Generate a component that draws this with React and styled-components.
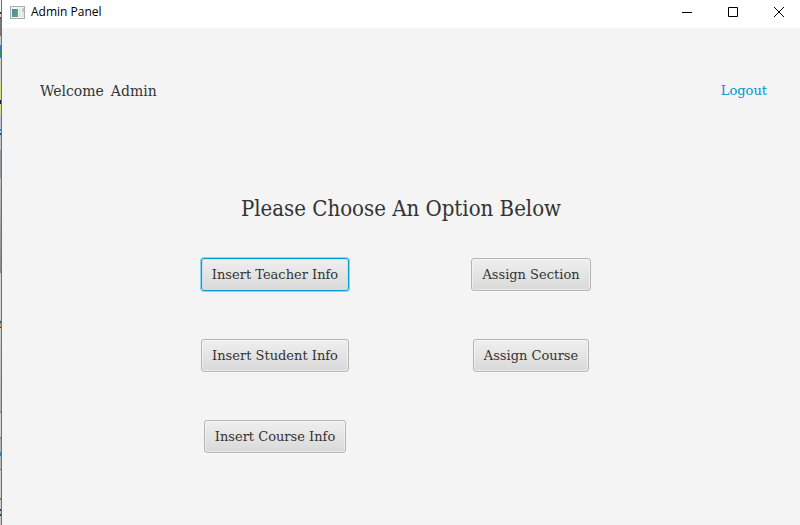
import React from "react";
import styled, { createGlobalStyle } from "styled-components";

const GlobalStyle = createGlobalStyle`
  * { box-sizing: border-box; }
  body { margin: 0; background: #f4f4f4; }
`;

const serif = `"DejaVu Serif", serif`;
const headingSerif = `"DejaVu Serif Condensed", "DejaVu Serif", serif`;

const Screen = styled.div`
  display: grid;
  grid-template-columns: 2px 1fr;
  min-height: 100vh;
`;

const DesktopEdge = styled.div`
  border-right: 1px solid #707070;
  background: linear-gradient(
    #f0f0f0 0 12px, #333 12px 14px, #ddd 14px 17px, #555 17px 19px, #777 19px 36px,
    #c8c8c8 36px 45px, #3c78b4 45px 51px, #2c8c50 51px 56px, #3c78b4 56px 58px, #d0d0d0 58px 82px,
    #d4e08c 82px 100px, #101850 100px 104px, #d4e08c 104px 114px, #c0c4c8 114px 129px,
    #3c8cc8 129px 131px, #c8d8e8 131px 133px, #0c4c9c 133px 135px, #c0c4c8 135px 150px,
    #9098a0 150px 178px, #c0c0c0 178px, #888 273px, #d4d4d4 273px 320px,
    #1a4a50 322px 323px, #d8a070 323px 327px, #1a4a50 327px 328px, #d0d0d0 328px,
    #b4b4b4 411px, #888 412px 413px, #d4d4d4 413px 437px, #888 437px 439px, #b4b4b4 439px 452px,
    #2c8cc0 452px 456px, #b8b8b8 456px 469px, #777 469px 470px, #d0d0d0 470px 498px,
    #777 498px 500px, #d0d0d0 500px 509px, #284080 509px 511px, #a0c8e8 511px 514px,
    #333 514px 516px, #c8c8c8 516px
  );
`;

const Window = styled.main`
  display: flex;
  flex-direction: column;
  background: #f4f4f4;
  color: #333;
  font: 13px/20px ${serif};
`;

const TitleBar = styled.header`
  display: flex;
  align-items: center;
  height: 28px;
  padding: 0 0 4px 8px;
  background: #fff;
  color: #000;
`;

const Title = styled.h1`
  flex: 1;
  margin: 0 0 0 6px;
  font: 12px/16px "Open Sans", "Noto Sans", sans-serif;
`;

const WindowButton = styled.button`
  display: flex;
  align-items: center;
  justify-content: center;
  width: 46px;
  height: 24px;
  margin: 0;
  padding: 0 0 0 4px;
  border: 0;
  background: transparent;
  color: #000;
`;

const UserBar = styled.div`
  display: flex;
  align-items: center;
  justify-content: space-between;
  padding: 53px 33px 0 38px;
`;

const Greeting = styled.p`
  display: flex;
  gap: 7px;
  margin: 0;
  font-size: 14px;
`;

const LogoutLink = styled.a`
  color: #0096c9;
  text-decoration: none;
`;

const Heading = styled.h2`
  margin: 93px 0 0;
  font: 22px/30px ${headingSerif};
  text-align: center;
`;

const Options = styled.div`
  display: grid;
  grid-template-columns: repeat(2, 256px);
  justify-content: center;
  justify-items: center;
  row-gap: 48px;
  padding: 34px 0 24px 4px;
`;

const OptionButton = styled.button`
  grid-column: ${({ $column }) => $column};
  grid-row: ${({ $row }) => $row};
  height: 33px;
  padding: 0 10px;
  border: 1px solid #b5b5b5;
  border-radius: 3px;
  background: linear-gradient(#efefef, #d9d9d9);
  box-shadow: inset 0 0 0 1px rgba(255, 255, 255, 0.45), 0 1px 0 #fafafa;
  color: #333;
  font: 13px/20px ${serif};
  white-space: nowrap;

  &:focus {
    outline: none;
    border-color: #039ed3;
    box-shadow: 0 0 0 1px #8fd2ea, inset 0 0 0 1px #c6e3ee;
  }
`;

const options = [
  { label: "Insert Teacher Info", column: 1, row: 1 },
  { label: "Insert Student Info", column: 1, row: 2 },
  { label: "Insert Course Info", column: 1, row: 3 },
  { label: "Assign Section", column: 2, row: 1 },
  { label: "Assign Course", column: 2, row: 2 },
];

function AppIcon() {
  return (
    <svg width="15" height="13" viewBox="0 0 15 13" aria-hidden="true">
      <defs>
        <linearGradient id="pane" x1="0" y1="0" x2="1" y2="1">
          <stop offset="0" stopColor="#4e82ad" />
          <stop offset="1" stopColor="#56b06c" />
        </linearGradient>
      </defs>
      <rect x=".5" y=".5" width="14" height="12" fill="#f4f4f4" stroke="#a9adb2" />
      <rect x="2" y="3" width="6" height="8" fill="url(#pane)" />
      <rect x="9" y="3" width="2" height="8" fill="#e1e3e5" />
      <rect x="12" y="2" width="2" height="4" fill="#b2d0d3" />
      <rect x="12" y="6" width="2" height="5" fill="#e3e5e5" />
    </svg>
  );
}

function ControlIcon({ d }) {
  return (
    <svg width="10" height="10" viewBox="0 0 10 10" fill="none" stroke="currentColor" aria-hidden="true">
      <path d={d} />
    </svg>
  );
}

export default function App() {
  return (
    <Screen>
      <GlobalStyle />
      <DesktopEdge />
      <Window>
        <TitleBar>
          <AppIcon />
          <Title>Admin Panel</Title>
          <WindowButton aria-label="Minimize"><ControlIcon d="M0 5.5H10" /></WindowButton>
          <WindowButton aria-label="Maximize"><ControlIcon d="M.5 .5H9.5V9.5H.5Z" /></WindowButton>
          <WindowButton aria-label="Close"><ControlIcon d="M0 0L10 10M10 0L0 10" /></WindowButton>
        </TitleBar>
        <UserBar>
          <Greeting><span>Welcome</span><span>Admin</span></Greeting>
          <LogoutLink href="#logout">Logout</LogoutLink>
        </UserBar>
        <Heading>Please Choose An Option Below</Heading>
        <Options>
          {options.map(({ label, column, row }) => (
            <OptionButton key={label} type="button" $column={column} $row={row} autoFocus={column === 1 && row === 1}>
              {label}
            </OptionButton>
          ))}
        </Options>
      </Window>
    </Screen>
  );
}
